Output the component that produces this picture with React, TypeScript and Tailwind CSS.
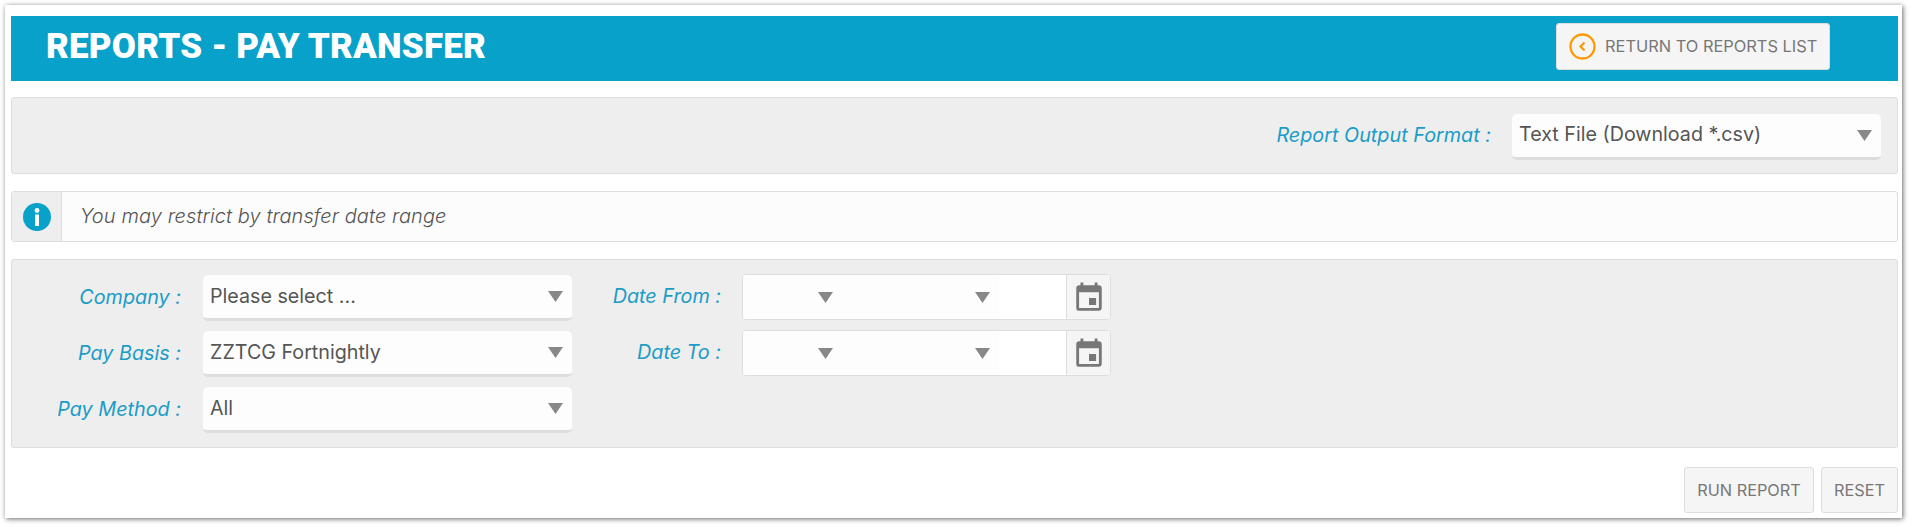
import { MdEvent } from "react-icons/md"

function Arrow() {
  return (
    <svg width="15" height="11" viewBox="0 0 15 11" className="shrink-0">
      <path d="M0 0h15L7.5 11z" fill="#888888" />
    </svg>
  )
}

function Select({ value, textClass = "mt-[1px]" }: { value: string; textClass?: string }) {
  return (
    <div className="flex h-[46px] w-[369px] items-center justify-between rounded-[5px] border-b-[3px] border-[#dddddd] bg-[#fdfdfd] pl-[7px] pr-[9px] text-[19.7px] text-[#555555]">
      <span className={textClass}>{value}</span>
      <Arrow />
    </div>
  )
}

function DateField() {
  return (
    <div className="flex h-[46px] w-[369px] overflow-hidden rounded-[4px] border border-[#dddddd] bg-white">
      <div className="flex w-[99px] items-center justify-end bg-[#fdfdfd] pr-[9px]">
        <Arrow />
      </div>
      <div className="flex w-[157px] items-center justify-end bg-[#fdfdfd] pr-[9px]">
        <Arrow />
      </div>
      <div className="w-[67px] bg-white" />
      <div className="flex flex-1 items-center justify-center border-l border-[#dddddd] bg-[#f5f5f5] pt-[2px]">
        <MdEvent size={34} color="#777777" />
      </div>
    </div>
  )
}

function Label({ text, width }: { text: string; width: string }) {
  return <div className={`${width} text-right text-[19.8px] italic text-[#1a9cc7]`}>{text}</div>
}

function Row({ label, value }: { label: string; value: string }) {
  return (
    <div className="flex h-[47px] items-center">
      <Label text={label} width="w-[169px]" />
      <div className="ml-[22px]">
        <Select value={value} />
      </div>
    </div>
  )
}

function DateRow({ label }: { label: string }) {
  return (
    <div className="flex h-[46px] items-center">
      <Label text={label} width="w-[149px]" />
      <div className="ml-[21px]">
        <DateField />
      </div>
    </div>
  )
}

export default function App() {
  return (
    <div className="h-[527px] w-[1912px] overflow-hidden bg-white font-['Inter',sans-serif]">
      <div className="ml-[5px] mt-[5px] h-[513px] w-[1897px] bg-white pl-[6px] pr-[4px] pt-[11px] shadow-[1px_1px_5px_rgba(0,0,0,0.6)]">
        {/* Title bar */}
        <header className="flex h-[65px] items-center justify-between bg-[#08a1ca] pb-[4px] pl-[35px] pr-[68px]">
          <h1 className="mt-[2px] font-['Roboto',sans-serif] text-[35px] font-black tracking-[0.2px] text-white">REPORTS - PAY TRANSFER</h1>
          <button className="flex h-[47px] w-[274px] items-center rounded-[3px] border border-[#dddddd] bg-[#f5f5f5] pl-[12px] text-[16.4px] text-[#777777]">
            <svg width="27" height="27" viewBox="0 0 27 27" fill="none" stroke="#ff9900" strokeWidth="2.3" className="shrink-0">
              <circle cx="13.5" cy="13.5" r="12" />
              <path d="M15.5 9.5l-4 4 4 4" strokeWidth="2.2" />
            </svg>
            <span className="ml-[9px]">RETURN TO REPORTS LIST</span>
          </button>
        </header>

        {/* Output format */}
        <section className="mt-[16px] flex h-[77px] justify-end rounded-[3px] border border-[#dddddd] bg-[#eeeeee] pr-[16px] pt-[16px]">
          <div className="flex h-[46px] items-center">
            <div className="-mt-[3px]">
              <Label text="Report Output Format :" width="w-auto" />
            </div>
            <div className="ml-[21px]">
              <Select value="Text File (Download *.csv)" textClass="-mt-[1px]" />
            </div>
          </div>
        </section>

        {/* Info message */}
        <section className="mt-[17px] flex h-[51px] overflow-hidden rounded-[3px] border border-[#dddddd] bg-[#fcfcfc]">
          <div className="flex w-[50px] items-center justify-center border-r border-[#dddddd] bg-[#eeeeee]">
            <svg width="28" height="28" viewBox="0 0 28 28">
              <circle cx="14" cy="14" r="14" fill="#08a1ca" />
              <circle cx="14" cy="7.5" r="2.4" fill="#ffffff" />
              <rect x="12" y="11.5" width="4" height="11.5" fill="#ffffff" />
            </svg>
          </div>
          <p className="-mt-[1px] flex items-center pl-[18px] text-[20px] font-[350] italic tracking-[0.08px] text-[#555555]">You may restrict by transfer date range</p>
        </section>

        {/* Filters */}
        <section className="mt-[17px] flex h-[189px] rounded-[3px] border border-[#dddddd] bg-[#eeeeee] pt-[14px]">
          <div className="flex flex-col gap-[9px]">
            <Row label="Company :" value="Please select ..." />
            <Row label="Pay Basis :" value="ZZTCG Fortnightly" />
            <Row label="Pay Method :" value="All" />
          </div>
          <div className="flex flex-col gap-[10px]">
            <DateRow label="Date From :" />
            <DateRow label="Date To :" />
          </div>
        </section>

        {/* Actions */}
        <div className="mt-[19px] flex justify-end gap-[7px]">
          <button className="h-[46px] w-[130px] rounded-[3px] border border-[#dddddd] bg-[#f5f5f5] text-[16.3px] text-[#777777]">RUN REPORT</button>
          <button className="h-[46px] w-[77px] rounded-[3px] border border-[#dddddd] bg-[#f5f5f5] text-[16.3px] text-[#777777]">RESET</button>
        </div>
      </div>
    </div>
  )
}
